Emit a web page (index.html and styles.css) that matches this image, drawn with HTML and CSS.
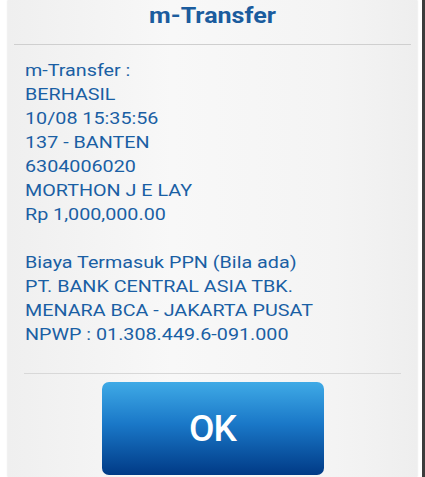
FILE: index.html
```html
<!DOCTYPE html>
<html lang="en">
<head>
    <meta charset="UTF-8">
    <meta name="viewport" content="width=device-width, initial-scale=1.0">
    <title>m-Transfer</title>
    <link rel="stylesheet" href="styles.css">
</head>
<body>

<div class="screen">
    <!-- Dialog -->
    <div class="dialog">
        <div class="dialog-header">
            <h1>m-Transfer</h1>
        </div>

        <div class="dialog-body">
            <p>m-Transfer :<br>
            BERHASIL<br>
            10/08 15:35:56<br>
            137 - BANTEN<br>
            6304006020<br>
            MORTHON J E LAY<br>
            Rp 1,000,000.00</p>

            <p>Biaya Termasuk PPN (Bila ada)<br>
            PT. BANK CENTRAL ASIA TBK.<br>
            MENARA BCA - JAKARTA PUSAT<br>
            NPWP : 01.308.449.6-091.000</p>
        </div>

        <div class="dialog-footer">
            <button class="ok-button">OK</button>
        </div>
    </div>

    <div class="screen-edge"></div>
</div>

</body>
</html>
```

FILE: styles.css
```css
body {
    margin: 0;
    padding: 0;
    background-color: #ffffff;
    font-family: Roboto, "Noto Sans", sans-serif;
    overflow: hidden;
}

.screen {
    display: flex;
    height: 477px;
}

.dialog {
    width: 409px;
    margin-left: 8px;
    display: flex;
    flex-direction: column;
    background: linear-gradient(to right, #efefef, #f8f8f8 40%, #f4f4f4 80%, #eeeeee);
    box-shadow: 0 0 2px rgba(0, 0, 0, 0.18);
}

.screen-edge {
    width: 3px;
    margin-left: auto;
    background-color: #3c3c3c;
}

/* Header with title */
.dialog-header {
    height: 44px;
    border-bottom: 1px solid #cfcfcf;
    margin: 0 6px;
}

.dialog-header h1 {
    margin: 0;
    font-size: 22px;
    line-height: 32px;
    font-weight: bold;
    text-align: center;
    color: #1b5c9e;
    transform: scaleX(1.14); /* screen capture is stretched sideways */
}

/* Message text */
.dialog-body {
    padding: 13px 17px 0 17px;
    color: #1a5fa4;
    font-size: 17px;
    line-height: 24px;
}

.dialog-body p {
    width: fit-content;
    margin: 0 0 24px 0;
    transform: scaleX(1.16);
    transform-origin: left center;
}

.dialog-body p:last-child {
    margin-bottom: 0;
}

/* Footer with button */
.dialog-footer {
    margin: 27px 16px 0 16px;
    padding-top: 8px;
    border-top: 1px solid #d8d8d8;
    display: flex;
    justify-content: center;
}

.ok-button {
    width: 222px;
    height: 93px;
    border: none;
    border-radius: 7px;
    background: linear-gradient(to bottom, #3faae6, #1a78c8 45%, #003a86);
    color: #ffffff;
    font-family: Roboto, sans-serif;
    font-size: 37px;
    font-weight: 500;
    letter-spacing: -1px;
}
```
